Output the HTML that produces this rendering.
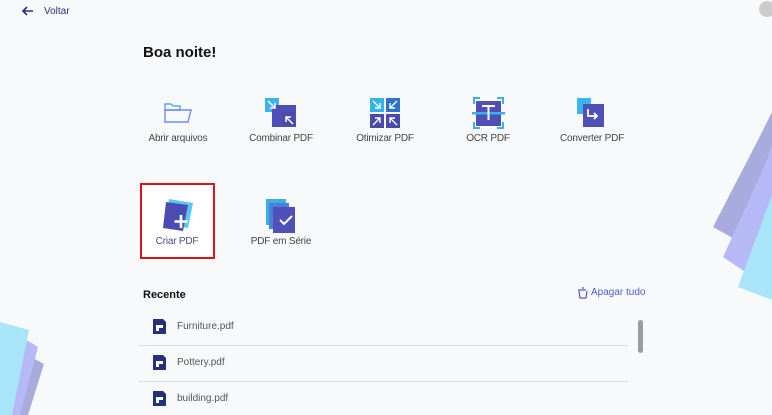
<!DOCTYPE html>
<html><head><meta charset="utf-8"><style>
*{margin:0;padding:0;box-sizing:border-box}
body{width:772px;height:415px;overflow:hidden;background:#f8f9fb;font-family:"Liberation Sans",sans-serif;position:relative;color:#333}
.a{position:absolute}
.lbl{position:absolute;font-size:10px;color:#444;text-align:center;width:100px;letter-spacing:-0.2px}
.fn{position:absolute;left:177px;font-size:10px;color:#555}
.sep{position:absolute;left:139px;width:489px;height:1px;background:#dcdde2}
</style></head><body>
<svg class="a" style="left:0;top:0" width="772" height="415">
<polygon points="713,227 758,140 772,112 772,262 740,242" fill="#a9aadd"/>
<polygon points="723,257 765,165 772,145 772,290" fill="#b5b9f6"/>
<polygon points="738,287 772,195 772,300" fill="#a8e5f8"/>
<polygon points="33,358 44,364 28,415 12,415" fill="#a9aadd"/>
<polygon points="0,330 30,342 38,347 20,415 0,415" fill="#b5b9f6"/>
<polygon points="0,322 29,330 12,415 0,415" fill="#a8e5f8"/>
<circle cx="767" cy="9" r="8" fill="#ccc"/>
<path d="M33 11H23M27 7L23 11L27 15" stroke="#2e2f7a" stroke-width="1.6" fill="none"/>
<path d="M165 104h6l2 2h7v4h-15z" fill="none" stroke="#5aa6f0" stroke-width="1.4"/>
<path d="M165 110h26l-3 12h-23z" fill="none" stroke="#6a8cf0" stroke-width="1.4"/>
<rect x="265" y="98" width="14" height="14" fill="#3ab4ec"/>
<rect x="272" y="105" width="24" height="22" fill="#5051b8"/>
<rect x="282" y="112" width="13" height="14" fill="#4b4aa8"/>
<path d="M268 101l7 7M275 103v5h-5" stroke="#fff" stroke-width="1.5" fill="none"/>
<path d="M293 124l-7-7M286 122v-5h5" stroke="#fff" stroke-width="1.5" fill="none"/>
<rect x="370" y="98" width="14" height="14" fill="#35b2e8"/>
<rect x="386" y="98" width="14" height="14" fill="#2d73c8"/>
<rect x="370" y="114" width="14" height="14" fill="#4a4aa8"/>
<rect x="386" y="114" width="14" height="14" fill="#4a4aa8"/>
<path d="M373 101l7 7M380 103v5h-5M397 101l-7 7M390 103v5h5M373 125l7-7M380 123v-5h-5M397 125l-7-7M390 123v-5h5" stroke="#fff" stroke-width="1.4" fill="none"/>
<rect x="476" y="101" width="25" height="25" fill="#4f4fb4"/>
<path d="M474 104v-6h6M497 98h6v6M474 122v6h6M497 128h6v-6" stroke="#3ab0ec" stroke-width="2" fill="none"/>
<rect x="472" y="112" width="33" height="2.5" fill="#3ab0ec"/>
<path d="M482 106h13M488.5 106v14" stroke="#fff" stroke-width="2"/>
<rect x="577" y="98" width="14" height="16" fill="#3ab4ec"/>
<rect x="583" y="104" width="21" height="23" fill="#5051b8"/>
<path d="M588 109v7h9M594 113l3 3l-3 3" stroke="#fff" stroke-width="1.8" fill="none"/>
<rect x="141" y="184" width="73" height="74" fill="#fff" stroke="#d9141b" stroke-width="2"/>
<polygon points="169,199 193,203 188,228 166,225" fill="#57c8f2"/>
<polygon points="166,202 188,205 183,231 163,228" fill="#4a4cb2"/>
<path d="M181 215v13M174.5 221.5h13" stroke="#fff" stroke-width="2.6"/>
<rect x="266" y="199" width="20" height="26" fill="#3ab0e8"/>
<rect x="269" y="203" width="20" height="26" fill="#4d7fd8"/>
<rect x="273" y="207" width="22" height="26" fill="#5051b8"/>
<path d="M280 220l4 4l8-8" stroke="#fff" stroke-width="2" fill="none"/>
<path d="M578 290h8M579 291l1 7h6l1-7M582 288h2" stroke="#4d5bc4" stroke-width="1.2" fill="none"/>
<g fill="#26307a"><path d="M153 319h10l3 3v12h-13z"/><path d="M153 355h10l3 3v12h-13z"/><path d="M153 391h10l3 3v12h-13z"/></g>
<g fill="#fff"><path d="M156 325h7v3h-4v3h-3z"/><path d="M156 361h7v3h-4v3h-3z"/><path d="M156 397h7v3h-4v3h-3z"/></g>
<rect x="638" y="320" width="5" height="33" rx="2.5" fill="#9a9ba3"/>
</svg>
<div class="a" style="left:44px;top:6px;font-size:10px;color:#2e2f7a">Voltar</div>
<div class="a" style="left:143px;top:44px;font-size:15px;font-weight:bold;color:#111">Boa noite!</div>
<div class="lbl" style="left:128px;top:133px">Abrir arquivos</div>
<div class="lbl" style="left:231px;top:133px">Combinar PDF</div>
<div class="lbl" style="left:335px;top:133px">Otimizar PDF</div>
<div class="lbl" style="left:438px;top:133px">OCR PDF</div>
<div class="lbl" style="left:542px;top:133px">Converter PDF</div>
<div class="lbl" style="left:127px;top:236px;color:#4a4c8a">Criar PDF</div>
<div class="lbl" style="left:231px;top:236px">PDF em Série</div>
<div class="a" style="left:143px;top:289px;font-size:11px;font-weight:bold;color:#111">Recente</div>
<div class="a" style="left:591px;top:287px;font-size:10px;color:#4d5bc4">Apagar tudo</div>
<div class="fn" style="top:321px">Furniture.pdf</div>
<div class="sep" style="top:345px"></div>
<div class="fn" style="top:357px">Pottery.pdf</div>
<div class="sep" style="top:381px"></div>
<div class="fn" style="top:393px">building.pdf</div>
</body></html>
